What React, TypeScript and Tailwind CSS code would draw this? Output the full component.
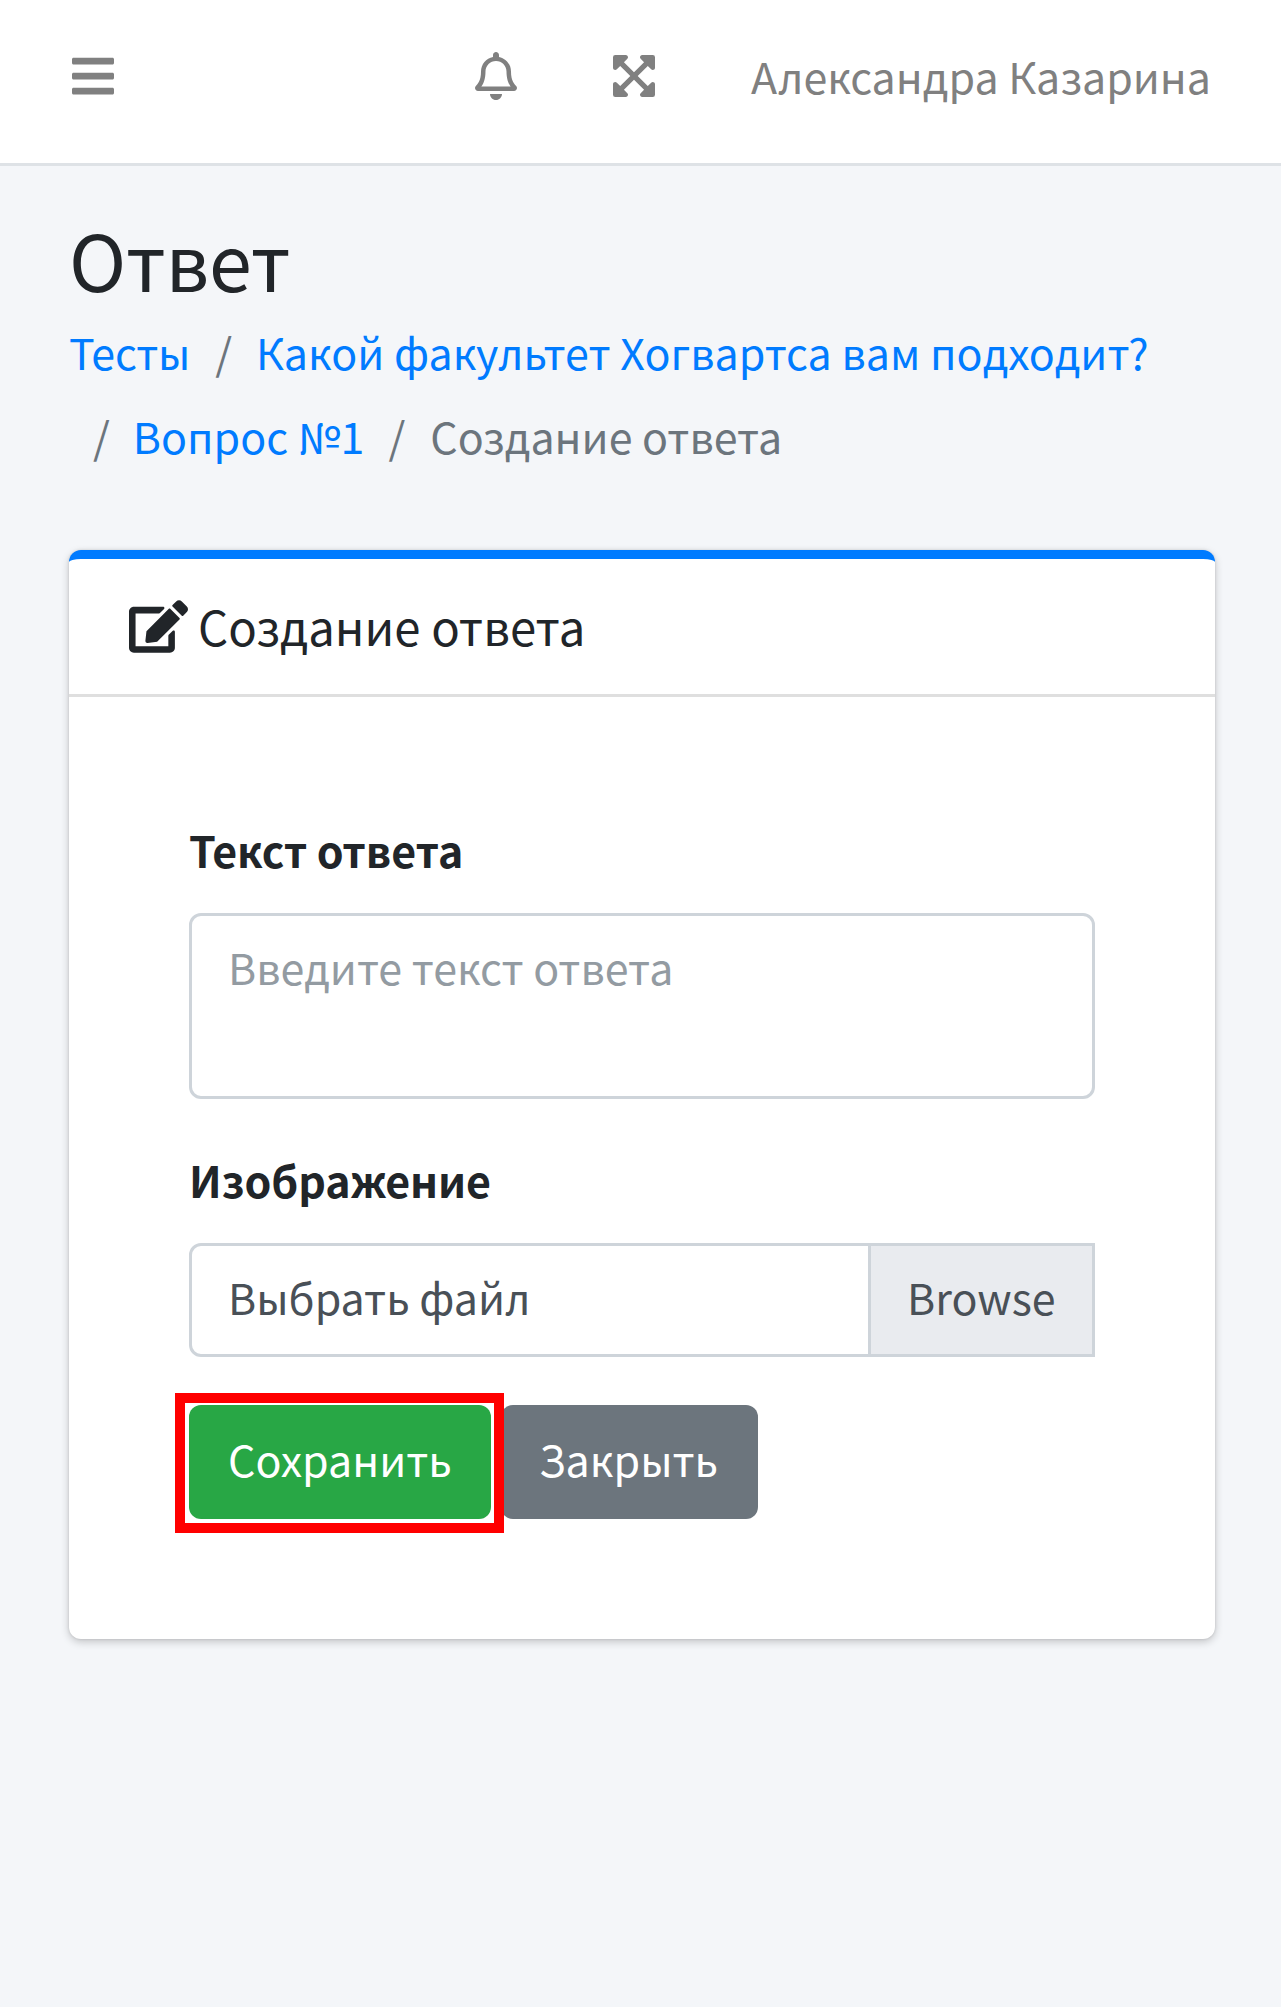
import React from "react";
import { FaBars, FaRegBell, FaExpandArrowsAlt, FaEdit } from "react-icons/fa";

function Slash({ className }: { className: string }) {
  return <span className={"text-[#6c757d] " + className}>/</span>;
}

export default function App() {
  return (
    <div className="h-[2007px] w-[1281px] overflow-hidden bg-[#f4f6f9] font-['Noto_Sans_CJK_SC','Noto_Sans',sans-serif] text-[42.95px] leading-[72px] text-[#212529]">
      <header className="flex h-[166px] items-start border-b-[3px] border-[#dee2e6] bg-white pl-[72px] text-[#808080]">
        <FaBars className="mt-[52px] h-[48px] w-[42px]" />
        <FaRegBell className="mt-[52px] ml-[361px] h-[48px] w-[42px]" />
        <FaExpandArrowsAlt className="mt-[52px] ml-[96px] h-[48px] w-[42px]" />
        <span className="mt-[39px] ml-[96px] tracking-[-0.04px] whitespace-nowrap">Александра Казарина</span>
      </header>

      <main className="px-[69px]">
        <h1 className="pt-[49px] text-[77.2px] leading-[86px] tracking-[-0.2px]">Ответ</h1>
        <nav className="mt-[14px] whitespace-nowrap text-[#007bff]">
          <div className="flex h-[84px]">
            <a className="tracking-[-0.2px]">Тесты</a>
            <Slash className="ml-[25px]" />
            <a className="ml-[24px] tracking-[0.03px]">Какой факультет Хогвартса вам подходит?</a>
          </div>
          <div className="flex h-[84px]">
            <Slash className="ml-[24px]" />
            <a className="ml-[23px]">Вопрос №1</a>
            <Slash className="ml-[24px]" />
            <span className="ml-[25px] text-[#6c757d]">Создание ответа</span>
          </div>
        </nav>

        <section className="mt-[67px] h-[1089px] w-[1146px] rounded-[12px] border-t-[9px] border-[#007bff] bg-white shadow-[0_3px_9px_rgba(0,0,0,0.2),0_0_3px_rgba(0,0,0,0.125)]">
          <div className="flex h-[138px] border-b-[3px] border-[#dfdfdf] pl-[60px]">
            <FaEdit className="mt-[41px] h-[53px] w-[59px]" />
            <h3 className="mt-[31px] ml-[10px] text-[47.25px] leading-[72px] whitespace-nowrap">Создание ответа</h3>
          </div>
          <form className="px-[120px] pt-[116px]">
            <label className="block h-[100px] font-bold tracking-[-0.1px]">Текст ответа</label>
            <div className="h-[186px] w-[906px] rounded-[12px] border-[3px] border-[#ced4da] bg-white pt-[14px] pl-[36px] text-[#939ba2]">Введите текст ответа</div>
            <label className="mt-[44px] block h-[100px] font-bold tracking-[-0.1px]">Изображение</label>
            <div className="flex h-[114px] w-[906px] rounded-l-[12px] border-[3px] border-[#ced4da] bg-white text-[#495057]">
              <span className="w-[676px] pt-[14px] pl-[36px]">Выбрать файл</span>
              <span className="flex-1 border-l-[3px] border-[#ced4da] bg-[#e9ebef] pt-[14px] pl-[36px]">Browse</span>
            </div>
            <div className="mt-[36px] -ml-[14px] flex text-white">
              <div className="z-10 h-[140px] w-[329px] border-[10px] border-[#ff0000] bg-white pt-[2px] pl-[4px]">
                <button type="button" className="block h-[114px] w-[302px] rounded-[12px] bg-[#28a745] pb-[8px]">Сохранить</button>
              </div>
              <button type="button" className="mt-[12px] -ml-[3px] h-[114px] w-[257px] rounded-[12px] bg-[#6c757d] pr-[2px] pb-[8px]">Закрыть</button>
            </div>
          </form>
        </section>
      </main>
    </div>
  );
}
